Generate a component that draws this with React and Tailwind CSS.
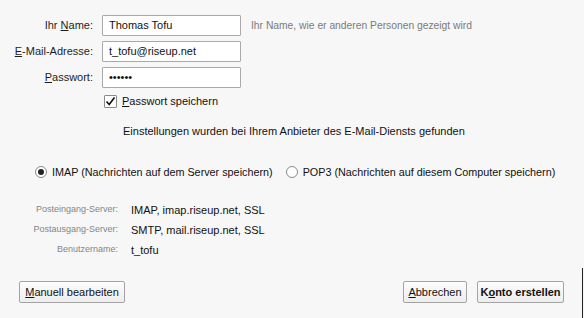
/*
  AccountSetup - mail account wizard: identity fields, server summary, actions.
*/

const INFO_ROWS = [
  { label: 'Posteingang-Server:', value: 'IMAP, imap.riseup.net, SSL' },
  { label: 'Postausgang-Server:', value: 'SMTP, mail.riseup.net, SSL' },
  { label: 'Benutzername:', value: 't_tofu' },
];

const font = { fontFamily: '"Liberation Sans", Arial, sans-serif' };

function Field({ label, value }) {
  return (
    <div className="flex items-center h-[21px]">
      <div className="w-[93px] text-right text-[11px] text-[#1e1e1e]">{label}</div>
      <div className="ml-[9px] w-[139px] h-[21px] border border-[#a9a9a9] bg-white rounded-[1px] flex items-center pl-[6px] text-[11px] text-[#111]">
        {value}
      </div>
    </div>
  );
}

function Radio({ checked, children }) {
  return (
    <div className="flex items-center">
      <span className="w-[12px] h-[12px] rounded-full border border-[#8a8a8a] bg-white flex items-center justify-center">
        {checked && <span className="w-[6px] h-[6px] rounded-full bg-[#222]" />}
      </span>
      <span className="ml-[5px] text-[10.8px] text-[#111]">{children}</span>
    </div>
  );
}

function Button({ children, className = '' }) {
  return (
    <button
      className={`h-[22px] border border-[#a3a3a3] rounded-[2px] bg-gradient-to-b from-[#fdfdfd] to-[#ededed] text-[11px] text-[#111] flex items-center justify-center ${className}`}
    >
      {children}
    </button>
  );
}

export default function App() {
  return (
    <div className="relative w-[584px] h-[318px] bg-[#f7f7f7] overflow-hidden" style={font}>
      <div className="pt-[15px] flex flex-col gap-[5px]">
        <div className="flex items-center">
          <Field label={<><span>Ihr </span><u>N</u>ame:</>} value="Thomas Tofu" />
          <span className="ml-[10px] text-[10.3px] text-[#7a7a7a]">Ihr Name, wie er anderen Personen gezeigt wird</span>
        </div>
        <Field label={<><u>E</u>-Mail-Adresse:</>} value="t_tofu@riseup.net" />
        <Field label={<><u>P</u>asswort:</>} value="••••••" />
      </div>

      <div className="mt-[5px] ml-[104px] flex items-center">
        <span className="w-[13px] h-[13px] border border-[#8a8a8a] bg-white rounded-[1px] flex items-center justify-center">
          <svg width="11" height="11" viewBox="0 0 11 11">
            <path d="M1.5 5.5 L4.2 8.5 L9.5 1.5" fill="none" stroke="#111" strokeWidth="1.6" />
          </svg>
        </span>
        <span className="ml-[5px] text-[11px] text-[#111]"><u>P</u>asswort speichern</span>
      </div>

      <div className="mt-[13px] ml-[123px] text-[11px] text-[#111]">
        Einstellungen wurden bei Ihrem Anbieter des E-Mail-Diensts gefunden
      </div>

      <div className="mt-[25px] ml-[35px] flex items-center gap-[13px]">
        <Radio checked>IMAP (Nachrichten auf dem Server speichern)</Radio>
        <Radio>POP3 (Nachrichten auf diesem Computer speichern)</Radio>
      </div>

      <div className="mt-[23px] flex flex-col gap-[6px]">
        {INFO_ROWS.map((row) => (
          <div key={row.label} className="flex items-center h-[14px]">
            <div className="w-[118px] text-right text-[9px] text-[#858585]">{row.label}</div>
            <div className="ml-[13px] text-[11px] text-[#111]">{row.value}</div>
          </div>
        ))}
      </div>

      <div className="mt-[24px] flex items-center pl-[19px] pr-[20px]">
        <Button className="w-[106px]"><u>M</u>anuell bearbeiten</Button>
        <div className="flex-1" />
        <Button className="w-[64px] mr-[10px]"><u>A</u>bbrechen</Button>
        <Button className="w-[87px] font-bold">K<u>o</u>nto erstellen</Button>
      </div>

      <div className="absolute right-[1px] top-[268px] bottom-0 w-[1px] bg-[#222]" />
    </div>
  );
}
